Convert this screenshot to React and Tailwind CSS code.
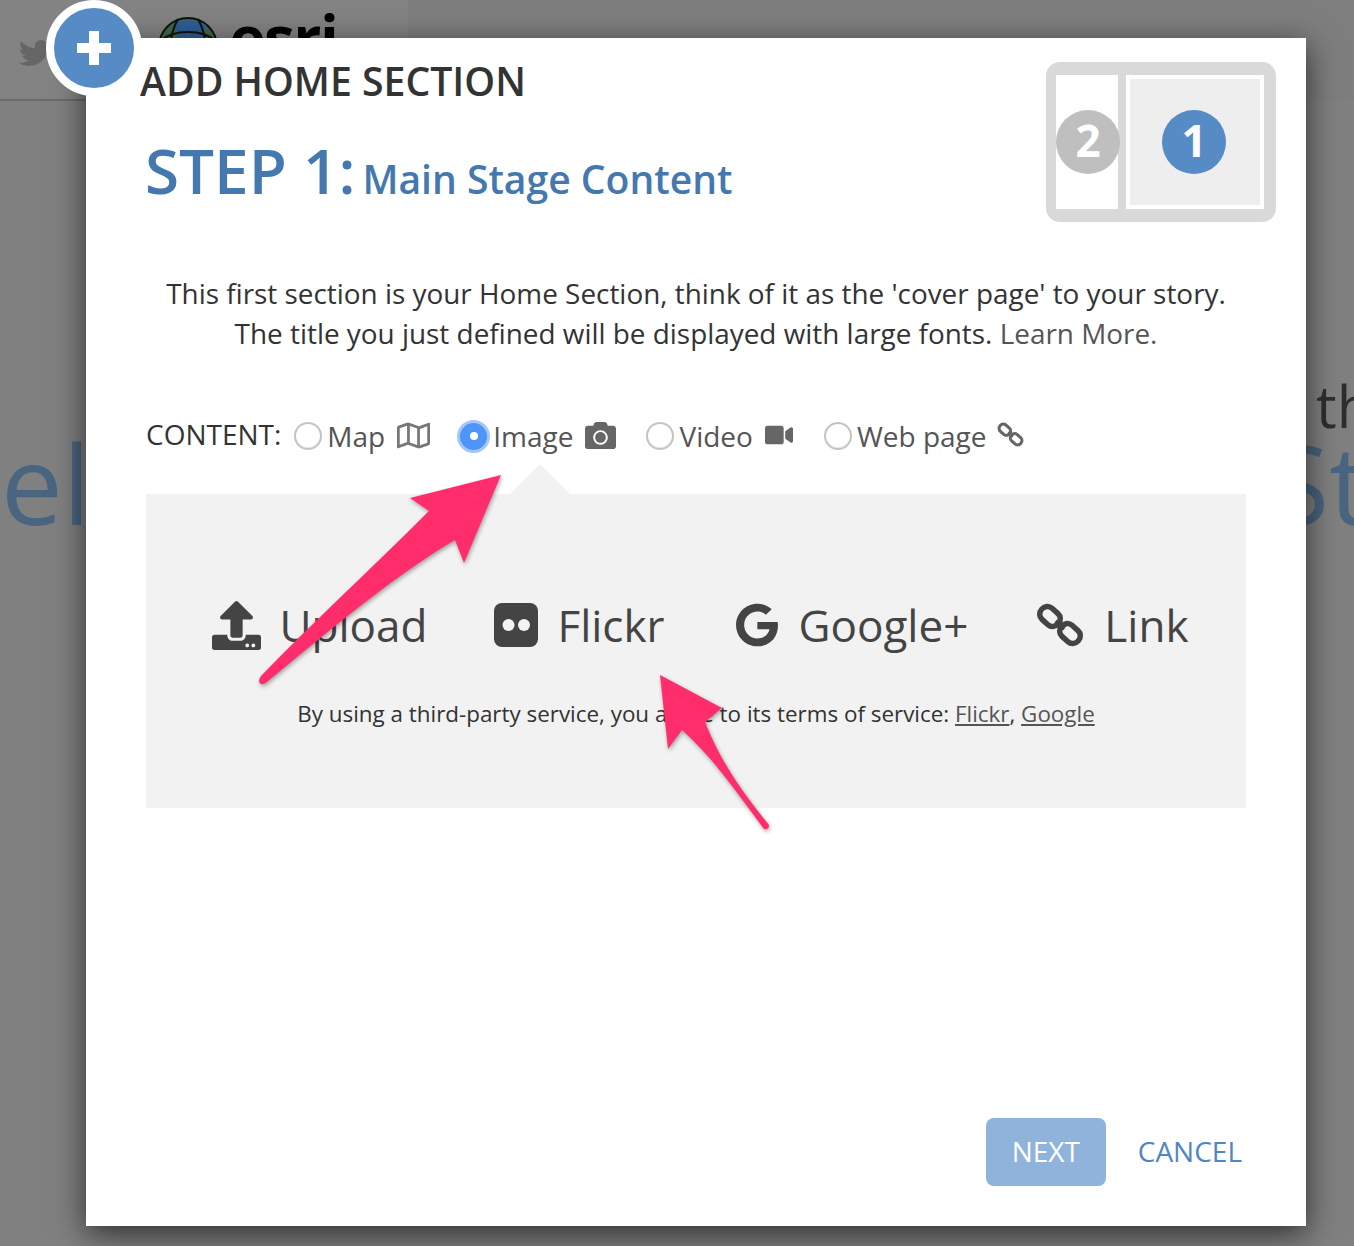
import React from "react";
import { FaTwitter, FaCamera, FaVideo, FaRegMap, FaGoogle, FaUpload } from "react-icons/fa";

function Chain({ className }) {
  return (
    <svg viewBox="0 0 48 48" className={className} fill="none" stroke="currentColor" strokeWidth="5.5">
      <rect x="3" y="8" width="22" height="15" rx="7" transform="rotate(42 14 15.5)" />
      <rect x="23" y="25" width="22" height="15" rx="7" transform="rotate(42 34 32.5)" />
      <path d="M19 21 L29 27" />
    </svg>
  );
}

function Flickr({ className }) {
  return (
    <svg viewBox="0 0 44 44" className={className}>
      <rect width="44" height="44" rx="8" fill="currentColor" />
      <circle cx="14.5" cy="22" r="6" fill="#f2f2f2" />
      <circle cx="30" cy="22" r="6" fill="#f2f2f2" />
    </svg>
  );
}

function Radio({ on }) {
  if (on)
    return (
      <span className="flex h-[33px] w-[33px] shrink-0 items-center justify-center rounded-full bg-[#4f94f7] border-[3px] border-[#a3c8f7]">
        <span className="h-[8px] w-[8px] rounded-full bg-white" />
      </span>
    );
  return <span className="h-[28px] w-[28px] shrink-0 rounded-full border-2 border-[#c4c4c4] bg-white shadow-[inset_0_-1px_1px_rgba(0,0,0,0.08)]" />;
}

function Source({ icon, label, className }) {
  return (
    <div className={`flex items-center ${className}`}>
      {icon}
      <span className="text-[44px] leading-[60px] text-[#444]">{label}</span>
    </div>
  );
}

export default function App() {
  return (
    <div className="relative h-[1246px] w-[1354px] overflow-hidden bg-[#808080] font-['Open_Sans',sans-serif]">
      <div className="absolute left-0 top-0 h-[101px] w-[408px] border-b-2 border-[#6b6b6b] bg-[#838383]" />
      <div className="absolute left-[408px] top-0 h-[100px] w-[946px] bg-[#7e7e7e]" />
      <FaTwitter className="absolute left-[19px] top-[37px] h-[32px] w-[32px] text-[#666]" />
      <svg viewBox="0 0 60 60" className="absolute left-[158px] top-[17px] h-[60px] w-[60px]">
        <circle cx="30" cy="30" r="29" fill="#3f6b4a" stroke="#111" strokeWidth="2" />
        <path d="M16 6 C24 2 40 2 48 8 L44 22 L20 20 Z" fill="#2e5f96" />
        <path d="M2 24 C16 12 44 12 58 24 M20 2 C10 20 10 40 20 58 M40 2 C50 20 50 40 40 58" fill="none" stroke="#111" strokeWidth="2" />
      </svg>
      <span className="absolute left-[229px] top-[-13px] text-[62px] font-bold leading-[100px] tracking-tight text-black">esri</span>
      <span className="absolute left-[1px] top-[402px] text-[110px] leading-[160px] text-[#4a6580]">el</span>
      <span className="absolute left-[1316px] top-[366px] text-[58px] leading-[80px] text-[#2e2e2e]">th</span>
      <span className="absolute left-[1269px] top-[412px] text-[110px] leading-[140px] text-[#4a6580]">St</span>

      <div className="absolute left-[86px] top-[38px] flex h-[1188px] w-[1220px] flex-col bg-white shadow-[0_8px_30px_rgba(0,0,0,0.65)]">
        <div className="flex items-start justify-between pl-[60px] pr-[30px] pt-[24px]">
          <div>
            <h1 className="ml-[-6px] mt-[-3px] text-[39.2px] font-semibold leading-[44px] text-[#333]">ADD HOME SECTION</h1>
            <div className="ml-[-1px] mt-[31px] flex items-baseline gap-[7px] text-[#4578ae]">
              <span className="text-[62px] font-semibold leading-[72px]">STEP 1:</span>
              <span className="text-[39.1px] font-semibold leading-[48px]">Main Stage Content</span>
            </div>
          </div>
          <div className="flex h-[160px] w-[230px] items-center gap-[8px] rounded-[14px] bg-[#d9d9d9] pl-[10px] pr-[12px]">
            <div className="flex h-[134px] w-[62px] items-center bg-white">
              <span className="flex h-[64px] w-[64px] shrink-0 items-center justify-center rounded-full bg-[#bfbfbf] pb-[4px] text-[44px] font-bold text-white">2</span>
            </div>
            <div className="h-[134px] w-[138px] border-4 border-white bg-[#eeeeee] pl-[32px] pt-[31px]">
              <span className="flex h-[64px] w-[64px] items-center justify-center rounded-full bg-[#578bc5] pb-[4px] text-[44px] font-bold text-white">1</span>
            </div>
          </div>
        </div>

        <p className="mt-[51px] text-center text-[27.9px] leading-[40px] text-[#333]">
          This first section is your Home Section, think of it as the 'cover page' to your story.
          <br />
          The title you just defined will be displayed with large fonts. <span className="text-[#555]">Learn More.</span>
        </p>

        <div className="ml-[60px] mt-[61px] flex h-[44px] items-center text-[28px] text-[#555]">
          <span className="mr-[13px] mt-[-4px] text-[#333]">CONTENT:</span>
          <Radio />
          <span className="ml-[5px] mt-[-1px]">Map</span>
          <FaRegMap className="ml-[12px] mt-[-2px] h-[33px] w-[33px] text-[#777]" />
          <span className="ml-[27px] flex"><Radio on /></span>
          <span className="ml-[3px] mt-[-1px]">Image</span>
          <FaCamera className="ml-[12px] mt-[-2px] h-[31px] w-[31px] text-[#666]" />
          <span className="ml-[30px] flex"><Radio /></span>
          <span className="ml-[5px] mt-[-1px]">Video</span>
          <FaVideo className="ml-[12px] mt-[-2px] h-[28px] w-[28px] text-[#666]" />
          <span className="ml-[31px] flex"><Radio /></span>
          <span className="ml-[5px] mt-[-1px]">Web page</span>
          <Chain className="ml-[10px] mt-[-4px] h-[27px] w-[27px] text-[#666]" />
        </div>

        <div className="relative mx-[60px] mt-[36px] h-[314px] bg-[#f2f2f2] pt-[101px]">
          <div className="absolute left-[364px] top-[-30px] h-0 w-0 border-x-[30px] border-b-[30px] border-x-transparent border-b-[#f2f2f2]" />
          <div className="flex justify-center gap-[68px] pl-[7px]">
            <Source className="gap-[18px]" label="Upload" icon={<FaUpload className="ml-[2px] h-[49px] w-[49px] text-[#444]" />} />
            <Source className="ml-[-1px] mr-[2px] gap-[19px]" label="Flickr" icon={<Flickr className="h-[44px] w-[44px] text-[#444]" />} />
            <Source className="gap-[20px]" label="Google+" icon={<FaGoogle className="h-[44px] w-[44px] text-[#444]" />} />
            <Source className="gap-[20px]" label="Link" icon={<Chain className="h-[48px] w-[48px] text-[#444]" />} />
          </div>
          <p className="mt-[41px] text-center text-[22.4px] leading-[36px] text-[#333]">
            By using a third-party service, you agree to its terms of service: <span className="text-[#555] underline">Flickr</span>, <span className="text-[#555] underline">Google</span>
          </p>
        </div>

        <div className="mt-auto flex items-center justify-end gap-[32px] pb-[40px] pr-[64px]">
          <button className="h-[68px] w-[120px] rounded-[8px] bg-[#8fb3da] pb-[2px] text-[28px] text-white">NEXT</button>
          <span className="mt-[-2px] text-[28px] text-[#4f86c6]">CANCEL</span>
        </div>
      </div>

      <div className="absolute left-[46px] top-0 flex h-[96px] w-[96px] items-center justify-center rounded-full border-8 border-white bg-[#578bc5]">
        <span className="relative block h-[34px] w-[34px]">
          <span className="absolute left-0 top-[12px] h-[10px] w-[34px] bg-white" />
          <span className="absolute left-[12px] top-0 h-[34px] w-[10px] bg-white" />
        </span>
      </div>

      <svg viewBox="0 0 1354 1246" className="pointer-events-none absolute inset-0 h-[1246px] w-[1354px] drop-shadow-[1px_2px_2px_rgba(0,0,0,0.35)]">
        <path d="M501 475 L410 498 L429 511 C370 570 310 625 261 676 Q257 682 261 684 Q265 685 268 681 C330 630 395 575 455 540 L464 563 Z" fill="#ff2d6b" />
        <path d="M660 675 L722 708 L705 722 C722 765 745 795 769 825 Q769 830 764 829 C735 790 715 760 682 730 L668 749 Z" fill="#ff2d6b" />
      </svg>
    </div>
  );
}
